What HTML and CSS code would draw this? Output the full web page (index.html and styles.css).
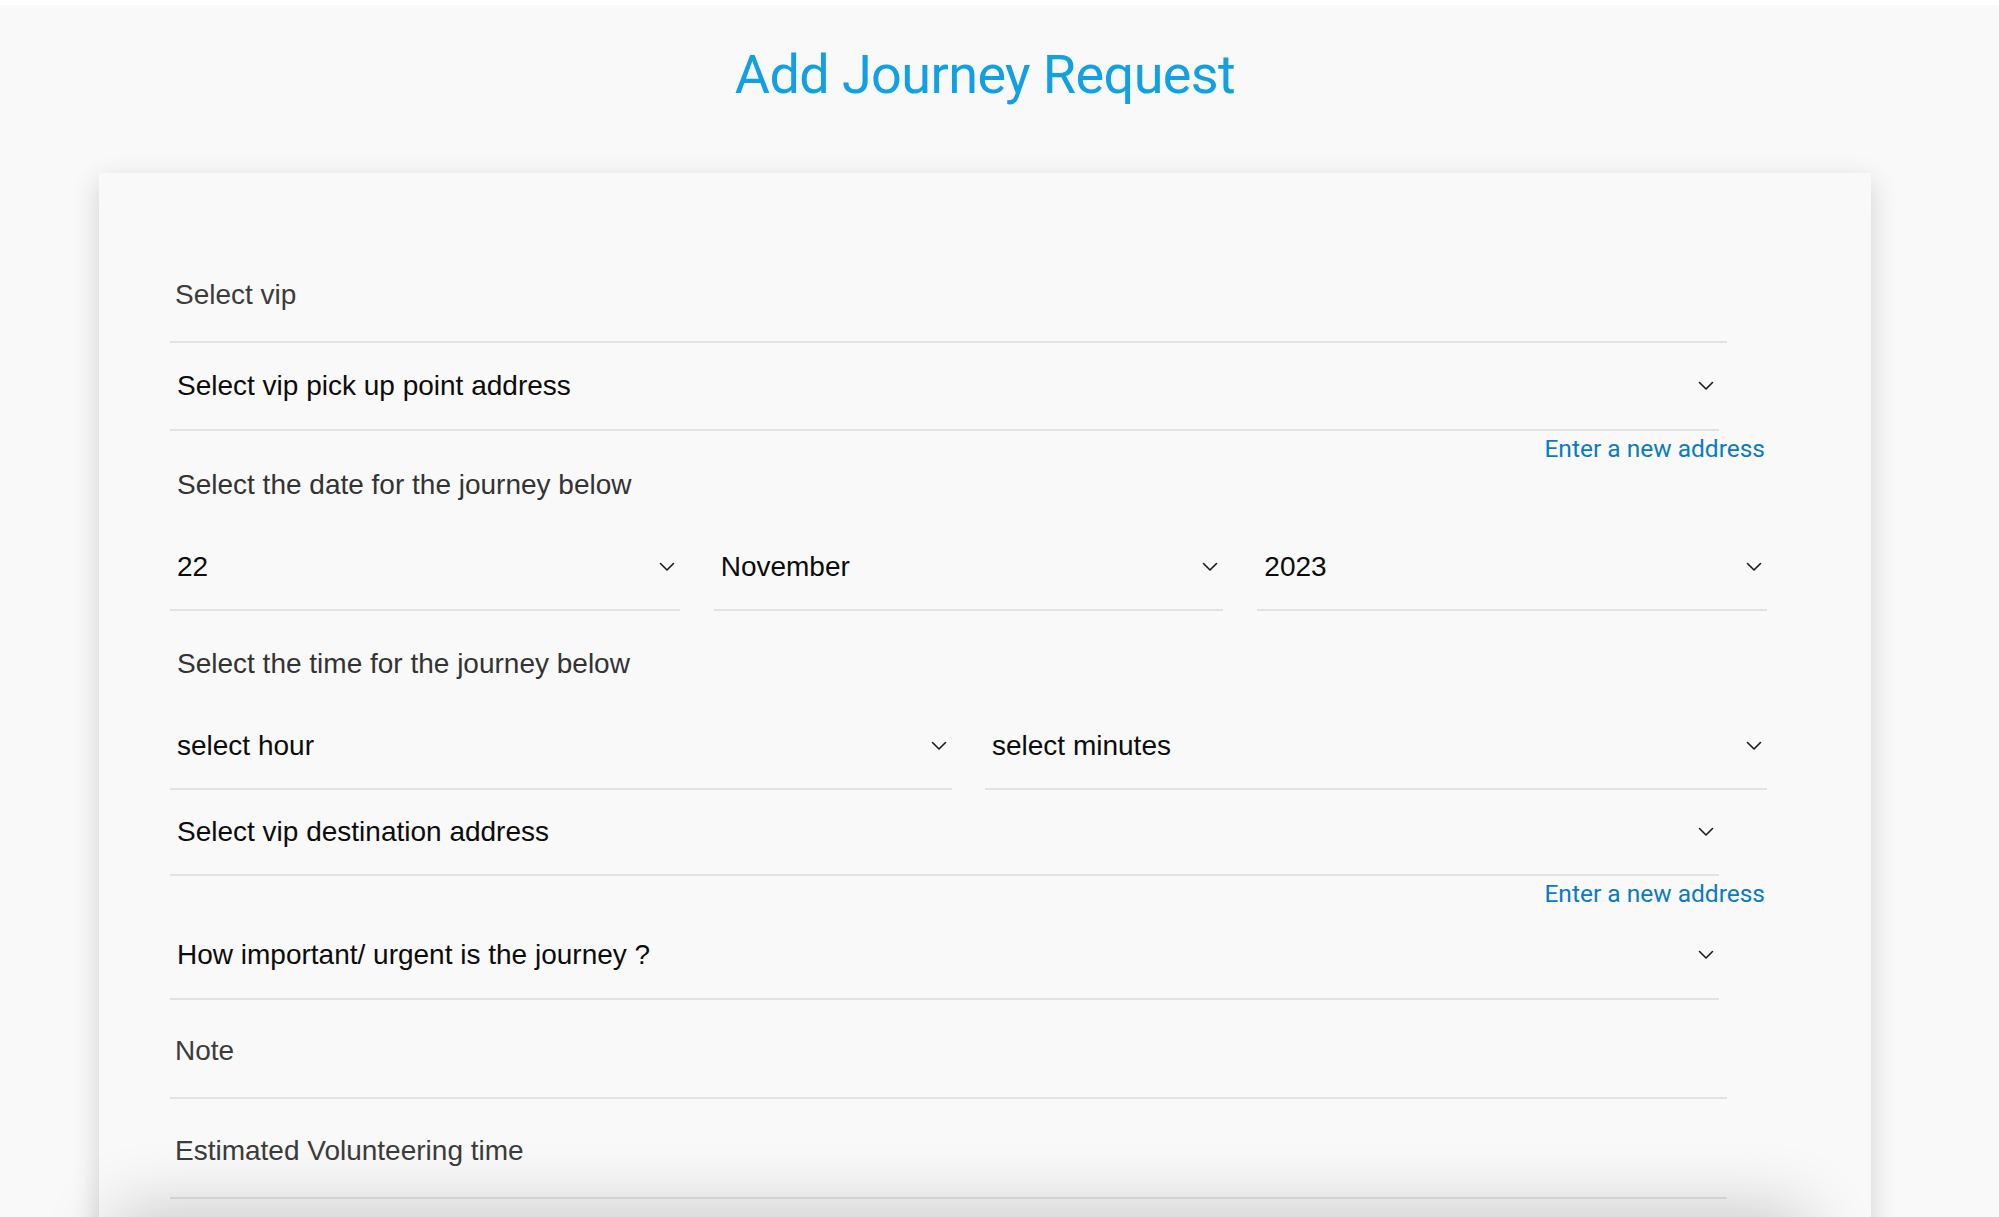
FILE: index.html
```html
<!DOCTYPE html>
<html lang="en">
<head>
<meta charset="utf-8">
<title>Add Journey Request</title>
<link rel="stylesheet" href="styles.css">
</head>
<body>
<div class="page">
  <h1 class="title">Add Journey Request</h1>
  <div class="card">
    <form class="form">
      <div class="input-field wide"><span class="placeholder">Select vip</span></div>

      <div class="select narrow tall">
        <span class="value">Select vip pick up point address</span>
        <svg class="chev" viewBox="0 0 16 10" width="16" height="10"><polyline points="1.5,1.5 8,8 14.5,1.5"/></svg>
      </div>
      <div class="link-row"><a class="link" href="#">Enter a new address</a></div>

      <div class="label">Select the date for the journey below</div>
      <div class="row three">
        <div class="select">
          <span class="value">22</span>
          <svg class="chev" viewBox="0 0 16 10" width="16" height="10"><polyline points="1.5,1.5 8,8 14.5,1.5"/></svg>
        </div>
        <div class="select">
          <span class="value">November</span>
          <svg class="chev" viewBox="0 0 16 10" width="16" height="10"><polyline points="1.5,1.5 8,8 14.5,1.5"/></svg>
        </div>
        <div class="select">
          <span class="value">2023</span>
          <svg class="chev" viewBox="0 0 16 10" width="16" height="10"><polyline points="1.5,1.5 8,8 14.5,1.5"/></svg>
        </div>
      </div>

      <div class="label label-time">Select the time for the journey below</div>
      <div class="row two">
        <div class="select">
          <span class="value">select hour</span>
          <svg class="chev" viewBox="0 0 16 10" width="16" height="10"><polyline points="1.5,1.5 8,8 14.5,1.5"/></svg>
        </div>
        <div class="select">
          <span class="value">select minutes</span>
          <svg class="chev" viewBox="0 0 16 10" width="16" height="10"><polyline points="1.5,1.5 8,8 14.5,1.5"/></svg>
        </div>
      </div>

      <div class="select narrow">
        <span class="value">Select vip destination address</span>
        <svg class="chev" viewBox="0 0 16 10" width="16" height="10"><polyline points="1.5,1.5 8,8 14.5,1.5"/></svg>
      </div>
      <div class="link-row"><a class="link" href="#">Enter a new address</a></div>

      <div class="select narrow tall">
        <span class="value">How important/ urgent is the journey ?</span>
        <svg class="chev" viewBox="0 0 16 10" width="16" height="10"><polyline points="1.5,1.5 8,8 14.5,1.5"/></svg>
      </div>

      <div class="input-field wide note"><span class="placeholder">Note</span></div>
      <div class="input-field wide estimated"><span class="placeholder">Estimated Volunteering time</span></div>

      <div class="form-footer"></div>
    </form>
  </div>
</div>
</body>
</html>
```

FILE: styles.css
```css
html, body {
  margin: 0;
  padding: 0;
  background: #f9f9f9;
  overflow: hidden;
}

body {
  border-top: 5px solid #ffffff;
  font-family: "Liberation Sans", Arial, sans-serif;
}

.page {
  width: 1970px;
}

.title {
  margin: 36px 0 0 0;
  height: 67px;
  line-height: 67px;
  text-align: center;
  font-family: Roboto, "Liberation Sans", sans-serif;
  font-weight: 400;
  font-size: 54px;
  letter-spacing: -0.6px;
  color: #12a0e3;
}

.card {
  margin: 65px 99px 0 99px;
  background: #f9f9f9;
  box-shadow: 0 8px 26px rgba(0, 0, 0, 0.16);
  padding: 102px 0 260px 71px;
}

.form {
  width: 1597px;
  display: flex;
  flex-direction: column;
}

.input-field {
  height: 40px;
  line-height: 40px;
  padding: 0 0 26px 5px;
  border-bottom: 2px solid #e2e2e2;
  font-size: 28px;
  box-sizing: content-box;
}

.input-field.wide {
  width: 1552px;
}

.placeholder {
  color: #3c3c3c;
}

.note {
  margin-top: 31px;
}

.estimated {
  margin-top: 32px;
}

.select {
  height: 84px;
  display: flex;
  align-items: center;
  justify-content: space-between;
  padding: 0 5px 0 7px;
  border-bottom: 2px solid #e2e2e2;
  font-size: 28px;
  color: #0c0c0c;
}

.select.tall {
  height: 86px;
}

.select.narrow {
  width: 1537px;
}

.value {
  line-height: normal;
}

.chev {
  flex: none;
  fill: none;
  stroke: #1a1a1a;
  stroke-width: 1.6;
  stroke-linecap: round;
  stroke-linejoin: round;
}

.link-row {
  height: 36px;
  line-height: 36px;
  text-align: right;
  padding-right: 2px;
}

.link {
  font-family: Roboto, "Liberation Sans", sans-serif;
  font-size: 24.5px;
  color: #0a7bc1;
  text-decoration: none;
}

.label {
  height: 32px;
  line-height: 32px;
  padding: 2px 0 0 7px;
  font-size: 28px;
  color: #333333;
}

.label-time {
  margin-top: 35px;
}

.row {
  display: grid;
  margin-top: 24px;
}

.row.three {
  grid-template-columns: repeat(3, 1fr);
  column-gap: 34px;
}

.row.two {
  grid-template-columns: repeat(2, 1fr);
  column-gap: 33px;
}

.form-footer {
  margin: 34px 0 0 -40px;
  width: 1660px;
  height: 120px;
  background: #ececec;
  box-shadow: 0 -6px 70px 16px rgba(0, 0, 0, 0.2);
}
```
